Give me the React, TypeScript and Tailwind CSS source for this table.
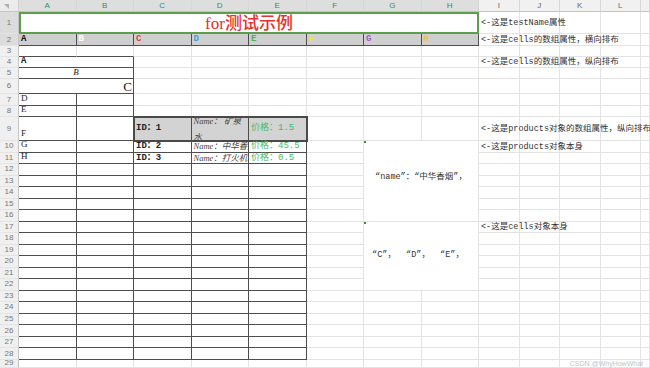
import type { ReactNode } from 'react'
import clsx from 'clsx'
import { twMerge } from 'tailwind-merge'

const LETTERS = ['A', 'B', 'C', 'D', 'E', 'F', 'G', 'H', 'I', 'J', 'K', 'L', '']
const ROWS = Array.from({ length: 29 }, (_, i) => i + 1)

// excel col: A = 1 ... L = 12, M = 13
function bordered(r: number, c: number) {
  if (r === 2 && c >= 1 && c <= 8) return true
  if (r >= 4 && r <= 28 && c >= 1 && c <= 2) return true
  if (r >= 9 && r <= 28 && c >= 3 && c <= 5) return true
  return false
}

function cellBg(r: number, c: number) {
  if (r === 2 && c <= 8) return 'bg-[#cfcfcf]'
  if (r === 9 && c >= 3 && c <= 5) return 'bg-[#d3d3d3]'
  return 'bg-white'
}

function Txt({
  r,
  c,
  span = 1,
  rows = 1,
  className,
  children,
}: {
  r: number
  c: number
  span?: number
  rows?: number
  className?: string
  children: ReactNode
}) {
  return (
    <div
      style={{ gridRow: `${r + 1} / span ${rows}`, gridColumn: `${c + 1} / span ${span}` }}
      className={twMerge('flex whitespace-nowrap px-[2px] text-[8.5px] leading-none text-[#333]', className)}
    >
      {children}
    </div>
  )
}

const rowLetters = [
  { t: 'A', c: 'text-[#111]' },
  { t: 'B', c: 'text-white' },
  { t: 'C', c: 'text-[#e0403a]' },
  { t: 'D', c: 'text-[#3aa0e0]' },
  { t: 'E', c: 'text-[#4cb050]' },
  { t: 'F', c: 'text-[#f2e23a]' },
  { t: 'G', c: 'text-[#9b5cc0]' },
  { t: 'H', c: 'text-[#f0c040]' },
]

const serifItalic = "font-['Liberation_Serif','Noto_Sans_CJK_SC',serif] italic text-[8.5px] text-[#444]"

export default function App() {
  return (
    <div className="h-[368px] w-[650px] overflow-hidden bg-white font-['Liberation_Mono','Noto_Sans_CJK_SC',monospace]">
      <div className="grid h-[368px] w-[650px] grid-cols-[19px_repeat(8,57.5px)_repeat(4,40.5px)_minmax(0,1fr)] grid-rows-[12px_22px_12px_11px_11px_11px_15px_12px_11px_24px_repeat(19,11.53px)_minmax(0,1fr)]">
        {/* column headers */}
        <div className="relative border-r border-b border-r-[#d0d0d0] border-b-[#c4c4c4] bg-[#ececec]">
          <span className="absolute left-[4px] top-[4px] h-0 w-0 border-l-[5px] border-t-[5px] border-l-transparent border-t-[#b0b0b0]" />
        </div>
        {LETTERS.map((l, i) => (
          <div
            key={'h' + i}
            className={clsx(
              "flex items-center justify-center border-r border-b border-r-[#d6d6d6] border-b-[#c4c4c4] font-['Liberation_Sans',sans-serif] text-[8px]",
              i < 8 ? 'bg-[#dedede] text-[#2f9163]' : 'bg-[#f1f1f1] text-[#6a6a6a]'
            )}
          >
            {l}
          </div>
        ))}

        {/* row headers + cells */}
        {ROWS.map((r) => (
          <div key={'r' + r} className="contents">
            <div
              style={{ gridRow: r + 1, gridColumn: 1 }}
              className={clsx(
                "flex items-center justify-center border-r border-b border-r-[#c4c4c4] border-b-[#e4e4e4] font-['Liberation_Sans',sans-serif] text-[8px] text-[#777]",
                r <= 2 ? 'bg-[#dcdcdc]' : 'bg-[#f0f0f0]'
              )}
            >
              {r}
            </div>
            {LETTERS.map((_, i) => {
              const c = i + 1
              const rd = bordered(r, c) || bordered(r, c + 1)
              const bd = bordered(r, c) || bordered(r + 1, c)
              return (
                <div
                  key={c}
                  style={{ gridRow: r + 1, gridColumn: c + 1 }}
                  className={clsx(
                    'border-r border-b',
                    rd ? 'border-r-[#4e4e4e]' : 'border-r-[#e3e3e3]',
                    bd ? 'border-b-[#4e4e4e]' : 'border-b-[#e3e3e3]',
                    cellBg(r, c)
                  )}
                />
              )
            })}
          </div>
        ))}

        {/* merged cells */}
        <div className="col-start-2 col-span-8 row-start-2 flex items-center justify-center border-2 border-[#5c9f4a] bg-white font-['Liberation_Serif','Noto_Sans_CJK_SC',serif] text-[17px] font-medium leading-none text-[#e8302c]">
          for测试示例
        </div>
        <div className="col-start-2 col-span-2 row-start-5 flex items-end border-r border-b border-[#4e4e4e] bg-white px-[2px] pb-[1px] text-[9px] font-bold leading-none text-[#222]">
          A
        </div>
        <div className="col-start-2 col-span-2 row-start-6 flex items-end justify-center border-r border-b border-[#4e4e4e] bg-white pb-[1px] font-['Liberation_Serif',serif] text-[9px] italic leading-none text-[#222]">
          B
        </div>
        <div className="col-start-2 col-span-2 row-start-7 flex items-end justify-end border-r border-b border-[#4e4e4e] bg-white px-[1px] font-['Liberation_Serif',serif] text-[13px] leading-none text-[#222]">
          C
        </div>
        <div className="relative col-start-8 col-span-2 row-start-11 row-span-7 flex items-center justify-center border-r border-b border-[#e3e3e3] bg-white pb-[8px] text-[8.5px] leading-none text-[#333]">
          <span className="absolute left-0 top-0 h-[2px] w-[2px] bg-[#2f9a3a]" />
          “name”：“中华香烟”，
        </div>
        <div className="relative col-start-8 col-span-2 row-start-18 row-span-6 flex items-center justify-center border-r border-b border-[#e3e3e3] bg-white pr-[6px] whitespace-pre text-[8.5px] leading-none text-[#333]">
          <span className="absolute left-0 top-0 h-[2px] w-[2px] bg-[#2f9a3a]" />
          {'“C”，  “D”，  “E”，'}
        </div>
        <div className="col-start-4 col-span-3 row-start-10 -m-px border-2 border-[#4a4a4a]" />

        {/* row 2 letters */}
        {rowLetters.map((l, i) => (
          <Txt key={l.t} r={2} c={i + 1} className={clsx('items-center text-[9px] font-bold', l.c)}>
            {l.t}
          </Txt>
        ))}

        {/* column A letters */}
        {['D', 'E', 'F', 'G', 'H'].map((t, i) => (
          <Txt key={t} r={7 + i} c={1} className="items-end pb-[1px] font-['Liberation_Serif',serif] text-[9px] text-[#222]">
            {t}
          </Txt>
        ))}

        {/* products table */}
        <Txt r={9} c={3} className="items-center text-[9px] font-bold text-[#222]">ID：1</Txt>
        <Txt r={9} c={4} className={twMerge('flex-col justify-center gap-[3px] whitespace-normal', serifItalic)}>
          <span className="whitespace-nowrap">Name：&nbsp;矿泉</span>
          <span>水</span>
        </Txt>
        <Txt r={9} c={5} className="items-center text-[9px] text-[#3fba6a]">价格：1.5</Txt>

        <Txt r={10} c={3} className="items-center text-[9px] font-bold text-[#222]">ID：2</Txt>
        <Txt r={10} c={4} className={twMerge('items-center overflow-hidden', serifItalic)}>Name：中华香烟</Txt>
        <Txt r={10} c={5} className="items-center text-[9px] text-[#3fba6a]">价格：45.5</Txt>

        <Txt r={11} c={3} className="items-center text-[9px] font-bold text-[#222]">ID：3</Txt>
        <Txt r={11} c={4} className={twMerge('items-center overflow-hidden', serifItalic)}>Name：打火机</Txt>
        <Txt r={11} c={5} className="items-center text-[9px] text-[#3fba6a]">价格：0.5</Txt>

        {/* notes in column I */}
        <Txt r={1} c={9} className="items-center">&lt;-这是testName属性</Txt>
        <Txt r={2} c={9} className="items-center">&lt;-这是cells的数组属性，横向排布</Txt>
        <Txt r={4} c={9} className="items-center">&lt;-这是cells的数组属性，纵向排布</Txt>
        <Txt r={9} c={9} className="items-center">&lt;-这是products对象的数组属性，纵向排布</Txt>
        <Txt r={10} c={9} className="items-center">&lt;-这是products对象本身</Txt>
        <Txt r={17} c={9} className="items-center">&lt;-这是cells对象本身</Txt>

        <div className="col-start-12 col-span-3 row-start-30 flex items-start justify-end pr-[7px] font-['Liberation_Sans',sans-serif] text-[7px] leading-none text-[#c4c4c4]">
          CSDN @WhyHowWhat
        </div>
      </div>
    </div>
  )
}
